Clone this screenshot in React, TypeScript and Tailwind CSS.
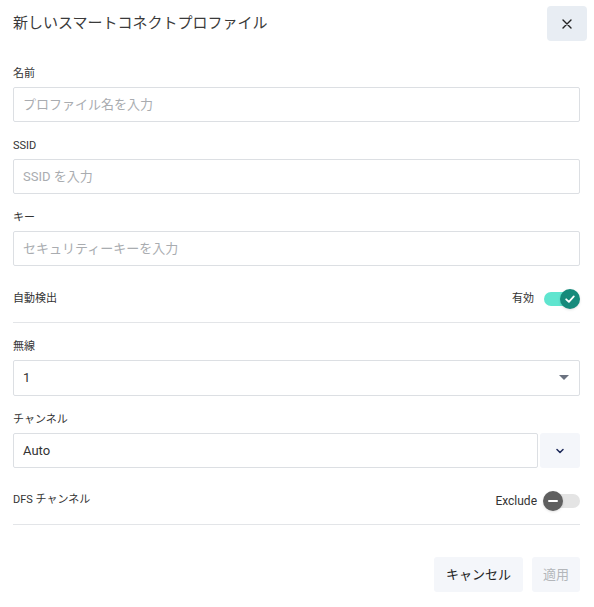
import React from 'react';

const font = { fontFamily: 'Roboto, "Noto Sans CJK JP", sans-serif' };

function Label({ children }: { children: React.ReactNode }) {
  return <div className="text-[11px] leading-[16px] text-[#333] mb-[5px]">{children}</div>;
}

function TextField({ placeholder }: { placeholder: string }) {
  return (
    <input
      type="text"
      placeholder={placeholder}
      className="w-full h-[35px] px-[9px] text-[13px] text-[#333] border border-[#dcdfe3] rounded-[2px] outline-none placeholder:text-[#a9acb0]"
    />
  );
}

export default function App() {
  return (
    <div className="w-[594px] h-[607px] bg-white pl-[13px] pr-[14px]" style={font}>
      {/* Header */}
      <div className="flex items-center justify-between pt-[6px]">
        <h1 className="text-[15px] text-[#3a3a3a] font-normal">新しいスマートコネクトプロファイル</h1>
        <button className="w-[40px] h-[35px] mr-[-7px] rounded-[4px] bg-[#e8edf3] flex items-center justify-center">
          <svg width="10" height="10" viewBox="0 0 10 10">
            <path d="M1 1L9 9M9 1L1 9" stroke="#222" strokeWidth="1.4" strokeLinecap="round" />
          </svg>
        </button>
      </div>

      <div className="mt-[25px]">
        <Label>名前</Label>
        <TextField placeholder="プロファイル名を入力" />
      </div>

      <div className="mt-[16px]">
        <Label>SSID</Label>
        <TextField placeholder="SSID を入力" />
      </div>

      <div className="mt-[16px]">
        <Label>キー</Label>
        <TextField placeholder="セキュリティーキーを入力" />
      </div>

      {/* Auto detect */}
      <div className="mt-[10px] h-[47px] flex items-center justify-between border-b border-[#e3e5e8]">
        <span className="text-[11px] text-[#333]">自動検出</span>
        <div className="flex items-center gap-[10px]">
          <span className="text-[11px] text-[#333]">有効</span>
          <div className="relative w-[36px] h-[20px] flex items-center">
            <div className="w-[34px] h-[14px] rounded-full bg-[#5fe5cf]" />
            <div className="absolute right-0 top-0 w-[20px] h-[20px] rounded-full bg-[#168a7b] flex items-center justify-center shadow">
              <svg width="12" height="12" viewBox="0 0 12 12">
                <path d="M2.2 6.3L4.9 8.8L9.8 3.4" fill="none" stroke="white" strokeWidth="1.8" strokeLinecap="round" strokeLinejoin="round" />
              </svg>
            </div>
          </div>
        </div>
      </div>

      <div className="mt-[16px]">
        <Label>無線</Label>
        <div className="h-[36px] border border-[#dcdfe3] rounded-[2px] flex items-center justify-between pl-[9px] pr-[10px]">
          <span className="text-[13px] text-[#333]">1</span>
          <svg width="10" height="6" viewBox="0 0 10 6">
            <path d="M0 0H10L5 5Z" fill="#6b7280" />
          </svg>
        </div>
      </div>

      <div className="mt-[16px]">
        <Label>チャンネル</Label>
        <div className="flex gap-[2px]">
          <div className="flex-1 h-[35px] border border-[#dcdfe3] rounded-[2px] flex items-center pl-[9px]">
            <span className="text-[13px] text-[#333]">Auto</span>
          </div>
          <button className="w-[40px] h-[35px] rounded-[3px] bg-[#f4f6fa] flex items-center justify-center">
            <svg width="8" height="6" viewBox="0 0 8 6">
              <path d="M1 1.5L4 4.5L7 1.5" fill="none" stroke="#1e2a5a" strokeWidth="1.5" strokeLinecap="round" strokeLinejoin="round" />
            </svg>
          </button>
        </div>
      </div>

      {/* DFS */}
      <div className="mt-[9px] h-[48px] flex items-center justify-between border-b border-[#e3e5e8]">
        <span className="text-[11px] text-[#333]">DFS チャンネル</span>
        <div className="flex items-center gap-[6px]">
          <span className="text-[12px] text-[#333]">Exclude</span>
          <div className="relative w-[37px] h-[20px] flex items-center justify-end">
            <div className="w-[34px] h-[14px] rounded-full bg-[#e4e4e4]" />
            <div className="absolute left-0 top-0 w-[20px] h-[20px] rounded-full bg-[#5f5f5f] flex items-center justify-center shadow">
              <div className="w-[10px] h-[2px] bg-white rounded" />
            </div>
          </div>
        </div>
      </div>

      {/* Footer */}
      <div className="mt-[32px] flex justify-end gap-[9px]">
        <button className="h-[35px] px-[12px] rounded-[3px] bg-[#f4f6fa] text-[13px] text-[#222]">キャンセル</button>
        <button className="h-[35px] px-[11px] rounded-[3px] bg-[#f4f6fa] text-[13px] text-[#b3b6ba]" disabled>
          適用
        </button>
      </div>
    </div>
  );
}
